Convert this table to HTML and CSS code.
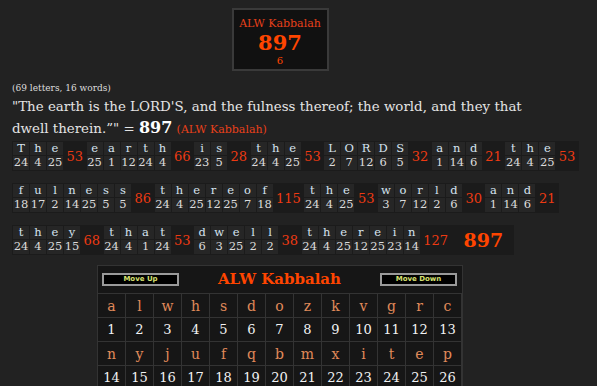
FILE: index.html
```html
<!DOCTYPE html>
<html>
<head>
<meta charset="utf-8">
<link rel="stylesheet" href="styles.css">
</head>
<body>
<div class="wrap">
  <div class="result">
    <div class="r-name">ALW Kabbalah</div>
    <div class="r-val">897</div>
    <div class="r-sub">6</div>
  </div>
</div>
<div class="count">(69 letters, 16 words)</div>
<div class="quote">"The earth is the LORD'S, and the fulness thereof; the world, and they that dwell therein.”" = <b class="q-num">897</b> <span class="q-ciph">(ALW Kabbalah)</span></div>

<div class="rows">
  <div class="row">
    <div class="lt"><span class="ch">T</span><span class="nm">24</span></div>
    <div class="lt"><span class="ch">h</span><span class="nm">4</span></div>
    <div class="lt"><span class="ch">e</span><span class="nm">25</span></div>
    <div class="tot">53</div>
    <div class="lt"><span class="ch">e</span><span class="nm">25</span></div>
    <div class="lt"><span class="ch">a</span><span class="nm">1</span></div>
    <div class="lt"><span class="ch">r</span><span class="nm">12</span></div>
    <div class="lt"><span class="ch">t</span><span class="nm">24</span></div>
    <div class="lt"><span class="ch">h</span><span class="nm">4</span></div>
    <div class="tot">66</div>
    <div class="lt"><span class="ch">i</span><span class="nm">23</span></div>
    <div class="lt"><span class="ch">s</span><span class="nm">5</span></div>
    <div class="tot">28</div>
    <div class="lt"><span class="ch">t</span><span class="nm">24</span></div>
    <div class="lt"><span class="ch">h</span><span class="nm">4</span></div>
    <div class="lt"><span class="ch">e</span><span class="nm">25</span></div>
    <div class="tot">53</div>
    <div class="lt"><span class="ch">L</span><span class="nm">2</span></div>
    <div class="lt"><span class="ch">O</span><span class="nm">7</span></div>
    <div class="lt"><span class="ch">R</span><span class="nm">12</span></div>
    <div class="lt"><span class="ch">D</span><span class="nm">6</span></div>
    <div class="lt"><span class="ch">S</span><span class="nm">5</span></div>
    <div class="tot">32</div>
    <div class="lt"><span class="ch">a</span><span class="nm">1</span></div>
    <div class="lt"><span class="ch">n</span><span class="nm">14</span></div>
    <div class="lt"><span class="ch">d</span><span class="nm">6</span></div>
    <div class="tot">21</div>
    <div class="lt"><span class="ch">t</span><span class="nm">24</span></div>
    <div class="lt"><span class="ch">h</span><span class="nm">4</span></div>
    <div class="lt"><span class="ch">e</span><span class="nm">25</span></div>
    <div class="tot">53</div>
  </div>

  <div class="row">
    <div class="lt"><span class="ch">f</span><span class="nm">18</span></div>
    <div class="lt"><span class="ch">u</span><span class="nm">17</span></div>
    <div class="lt"><span class="ch">l</span><span class="nm">2</span></div>
    <div class="lt"><span class="ch">n</span><span class="nm">14</span></div>
    <div class="lt"><span class="ch">e</span><span class="nm">25</span></div>
    <div class="lt"><span class="ch">s</span><span class="nm">5</span></div>
    <div class="lt"><span class="ch">s</span><span class="nm">5</span></div>
    <div class="tot">86</div>
    <div class="lt"><span class="ch">t</span><span class="nm">24</span></div>
    <div class="lt"><span class="ch">h</span><span class="nm">4</span></div>
    <div class="lt"><span class="ch">e</span><span class="nm">25</span></div>
    <div class="lt"><span class="ch">r</span><span class="nm">12</span></div>
    <div class="lt"><span class="ch">e</span><span class="nm">25</span></div>
    <div class="lt"><span class="ch">o</span><span class="nm">7</span></div>
    <div class="lt"><span class="ch">f</span><span class="nm">18</span></div>
    <div class="tot">115</div>
    <div class="lt"><span class="ch">t</span><span class="nm">24</span></div>
    <div class="lt"><span class="ch">h</span><span class="nm">4</span></div>
    <div class="lt"><span class="ch">e</span><span class="nm">25</span></div>
    <div class="tot">53</div>
    <div class="lt"><span class="ch">w</span><span class="nm">3</span></div>
    <div class="lt"><span class="ch">o</span><span class="nm">7</span></div>
    <div class="lt"><span class="ch">r</span><span class="nm">12</span></div>
    <div class="lt"><span class="ch">l</span><span class="nm">2</span></div>
    <div class="lt"><span class="ch">d</span><span class="nm">6</span></div>
    <div class="tot">30</div>
    <div class="lt"><span class="ch">a</span><span class="nm">1</span></div>
    <div class="lt"><span class="ch">n</span><span class="nm">14</span></div>
    <div class="lt"><span class="ch">d</span><span class="nm">6</span></div>
    <div class="tot">21</div>
  </div>

  <div class="row">
    <div class="lt"><span class="ch">t</span><span class="nm">24</span></div>
    <div class="lt"><span class="ch">h</span><span class="nm">4</span></div>
    <div class="lt"><span class="ch">e</span><span class="nm">25</span></div>
    <div class="lt"><span class="ch">y</span><span class="nm">15</span></div>
    <div class="tot">68</div>
    <div class="lt"><span class="ch">t</span><span class="nm">24</span></div>
    <div class="lt"><span class="ch">h</span><span class="nm">4</span></div>
    <div class="lt"><span class="ch">a</span><span class="nm">1</span></div>
    <div class="lt"><span class="ch">t</span><span class="nm">24</span></div>
    <div class="tot">53</div>
    <div class="lt"><span class="ch">d</span><span class="nm">6</span></div>
    <div class="lt"><span class="ch">w</span><span class="nm">3</span></div>
    <div class="lt"><span class="ch">e</span><span class="nm">25</span></div>
    <div class="lt"><span class="ch">l</span><span class="nm">2</span></div>
    <div class="lt"><span class="ch">l</span><span class="nm">2</span></div>
    <div class="tot">38</div>
    <div class="lt"><span class="ch">t</span><span class="nm">24</span></div>
    <div class="lt"><span class="ch">h</span><span class="nm">4</span></div>
    <div class="lt"><span class="ch">e</span><span class="nm">25</span></div>
    <div class="lt"><span class="ch">r</span><span class="nm">12</span></div>
    <div class="lt"><span class="ch">e</span><span class="nm">25</span></div>
    <div class="lt"><span class="ch">i</span><span class="nm">23</span></div>
    <div class="lt"><span class="ch">n</span><span class="nm">14</span></div>
    <div class="tot">127</div>
    <div class="tot grand">897</div>
  </div>
</div>

<div class="wrap">
  <div class="cipher">
    <div class="c-head">
      <button class="btn">Move Up</button>
      <div class="c-title">ALW Kabbalah</div>
      <button class="btn">Move Down</button>
    </div>
    <div class="c-grid">
      <div class="c-l">a</div><div class="c-l">l</div><div class="c-l">w</div><div class="c-l">h</div><div class="c-l">s</div><div class="c-l">d</div><div class="c-l">o</div><div class="c-l">z</div><div class="c-l">k</div><div class="c-l">v</div><div class="c-l">g</div><div class="c-l">r</div><div class="c-l">c</div>
      <div class="c-n">1</div><div class="c-n">2</div><div class="c-n">3</div><div class="c-n">4</div><div class="c-n">5</div><div class="c-n">6</div><div class="c-n">7</div><div class="c-n">8</div><div class="c-n">9</div><div class="c-n">10</div><div class="c-n">11</div><div class="c-n">12</div><div class="c-n">13</div>
      <div class="c-l">n</div><div class="c-l">y</div><div class="c-l">j</div><div class="c-l">u</div><div class="c-l">f</div><div class="c-l">q</div><div class="c-l">b</div><div class="c-l">m</div><div class="c-l">x</div><div class="c-l">i</div><div class="c-l">t</div><div class="c-l">e</div><div class="c-l">p</div>
      <div class="c-n">14</div><div class="c-n">15</div><div class="c-n">16</div><div class="c-n">17</div><div class="c-n">18</div><div class="c-n">19</div><div class="c-n">20</div><div class="c-n">21</div><div class="c-n">22</div><div class="c-n">23</div><div class="c-n">24</div><div class="c-n">25</div><div class="c-n">26</div>
    </div>
  </div>
</div>
</body>
</html>
```

FILE: styles.css
```css
html, body {
  background: #222222;
}
body {
  margin: 8px;
  font-family: "DejaVu Serif", "Liberation Serif", serif;
  color: #dddddd;
}
.wrap {
  width: 544px;
  display: flex;
  justify-content: center;
}
.result {
  width: 93px;
  height: 59px;
  background: #111111;
  border: 2px solid #3a3a3a;
  display: flex;
  flex-direction: column;
  align-items: center;
}
.r-name {
  color: #e8401a;
  font-size: 11px;
  margin-top: 8px;
  line-height: 12px;
}
.r-val {
  color: #ff4500;
  font-weight: bold;
  font-size: 21px;
  line-height: 24px;
  margin-top: 1px;
}
.r-sub {
  color: #ff4500;
  font-size: 10px;
  line-height: 12px;
}
.count {
  font-size: 9px;
  color: #dddddd;
  margin-top: 11px;
  margin-left: 4px;
  line-height: 12px;
}
.quote {
  font-size: 13.4px;
  line-height: 21px;
  margin-left: 4px;
  margin-top: 2px;
  width: 540px;
  color: #e4e4e4;
}
.q-num {
  color: #ffffff;
  font-size: 16px;
}
.q-ciph {
  color: #e8401a;
  font-size: 11px;
}
.rows {
  display: block;
  margin-top: 1px;
  margin-left: 4px;
}
.row {
  display: flex;
  width: max-content;
  background: #1b1b1b;
  padding: 1px;
  gap: 1px;
  white-space: nowrap;
  margin-bottom: 12px;
}
.row:last-child {
  margin-bottom: 0;
}
.lt {
  display: flex;
  flex-direction: column;
  gap: 1px;
  width: 16px;
  flex-shrink: 0;
}
.ch, .nm {
  display: block;
  background: #262626;
  text-align: center;
  font-size: 11.5px;
  line-height: 13px;
  height: 13px;
}
.ch {
  color: #d6e4f0;
}
.nm {
  color: #dcdcdc;
  height: 14px;
}
.tot {
  display: flex;
  align-items: center;
  justify-content: center;
  flex-shrink: 0;
  padding: 0 2.5px;
  color: #ee3a12;
  font-size: 13px;
}
.grand {
  color: #ff4500;
  font-weight: bold;
  font-size: 19px;
  padding: 0 10px 0 12px;
}
.cipher {
  margin-top: 10px;
  width: 364px;
  background: #161616;
  border: 1px solid #333333;
}
.c-head {
  display: flex;
  align-items: center;
  justify-content: space-between;
  padding: 4px 5px 5px 4px;
  height: 18px;
  border-bottom: 1px solid #333333;
}
.btn {
  width: 77px;
  height: 13px;
  padding: 0;
  background: #000000;
  border: 2px solid #9a9a9a;
  color: #d8e070;
  font-family: "DejaVu Sans", Verdana, sans-serif;
  font-weight: bold;
  font-size: 7px;
  line-height: 9px;
}
.c-title {
  color: #ff4500;
  font-weight: bold;
  font-size: 15px;
}
.c-grid {
  display: grid;
  grid-template-columns: repeat(13, 1fr);
}
.c-l, .c-n {
  height: 23px;
  display: flex;
  align-items: center;
  justify-content: center;
  border-right: 1px solid #333333;
  border-bottom: 1px solid #333333;
  font-size: 13px;
}
.c-l {
  color: #e08a5a;
  font-size: 14px;
}
.c-n {
  color: #f2f2f2;
}
```
